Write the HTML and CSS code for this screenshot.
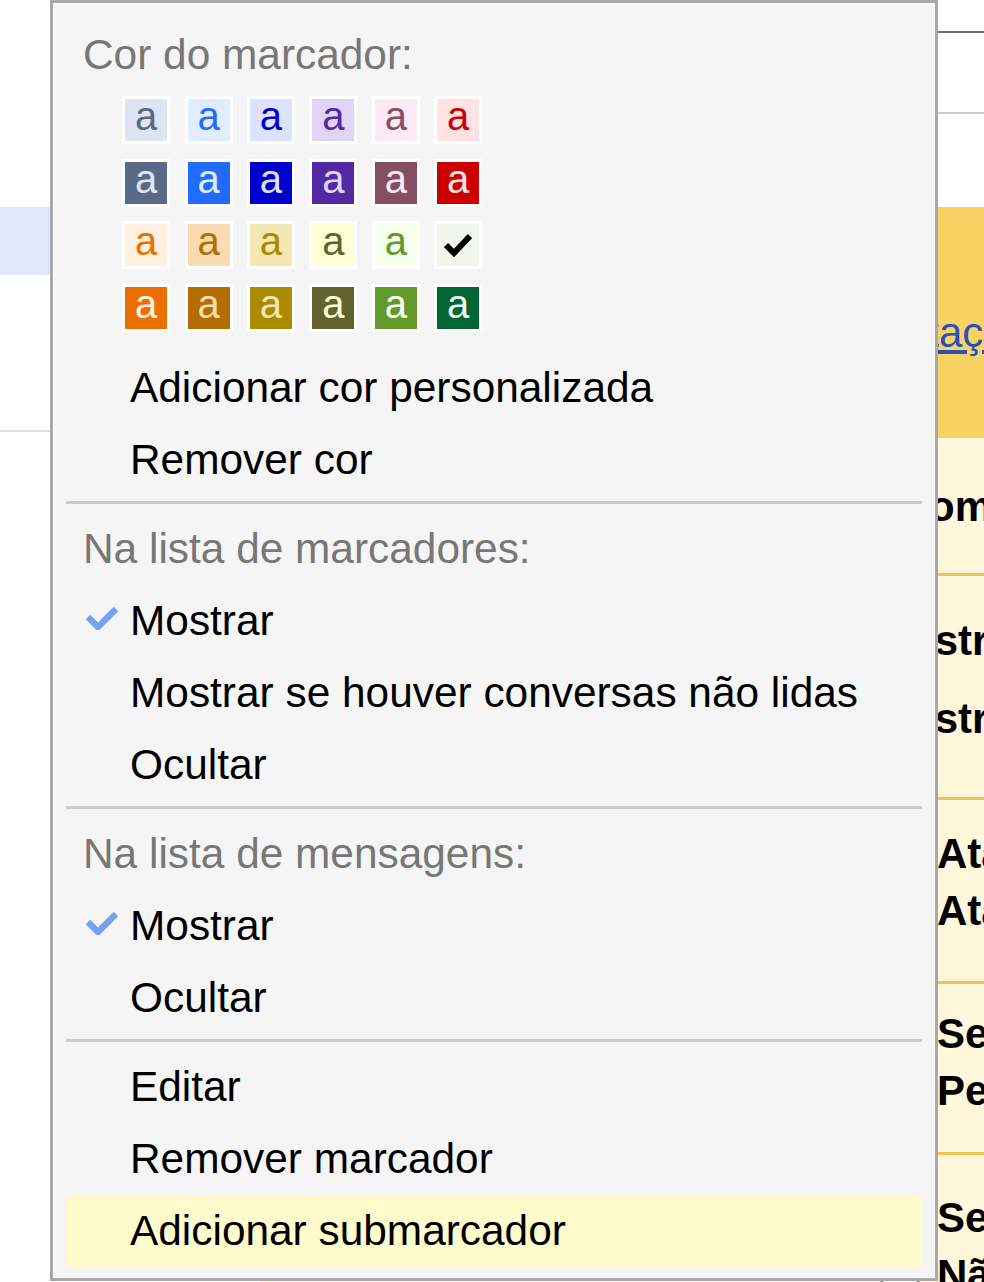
FILE: index.html
```html
<!DOCTYPE html>
<html lang="pt-BR">
<head>
  <meta charset="UTF-8">
  <meta name="viewport" content="width=device-width, initial-scale=1.0">
  <title>Configurações - Marcadores</title>

  <link rel="stylesheet" href="styles.css">
</head>
<body>

  <div class="page">

    <div class="nav">
      <div class="nav-list">
        <div class="nav-item selected">Trabalho</div>
        <div class="nav-item">Viagens</div>
        <div class="nav-item">Mais</div>
      </div>
      <div class="nav-item">Contatos</div>
    </div>

    <div class="main">
      <div class="searchbar"></div>
      <div class="toolbar"></div>

      <div class="settings">
        <div class="settings-head">
          <div class="settings-title">Configurações</div>
          <div class="tabs">
            <a href="#">Geral</a>
            <a href="#">Marcadores</a>
            <a href="#">Contas e importação</a>
            <a href="#">Filtros</a>
          </div>
        </div>

        <div class="settings-row row-a">
          <div class="row-label">Idioma:</div>
          <div class="row-options">
            <div class="opt">Idioma do Gmail: Português (Brasil)</div>
          </div>
        </div>

        <div class="settings-row row-b">
          <div class="row-label">Tamanho máximo da página:</div>
          <div class="row-options">
            <div class="opt">Mostrar 50 conversas por página</div>
            <div class="opt">Mostrar 250 contatos por página</div>
          </div>
        </div>

        <div class="settings-row row-c">
          <div class="row-label">Atalhos do teclado:</div>
          <div class="row-options">
            <div class="opt"><span class="radio"></span>Atalhos de teclado desativados</div>
            <div class="opt"><span class="radio"></span>Atalhos de teclado ativados</div>
          </div>
        </div>

        <div class="settings-row row-d">
          <div class="row-label">Imagens:</div>
          <div class="row-options">
            <div class="opt"><span class="radio"></span>Sempre mostrar imagens externas</div>
            <div class="opt"><span class="radio"></span>Perguntar antes de mostrar imagens externas</div>
          </div>
        </div>

        <div class="settings-row row-e">
          <div class="row-label">Indicadores de nível pessoal:</div>
          <div class="row-options">
            <div class="opt"><span class="radio"></span>Sem indicadores</div>
            <div class="opt"><span class="radio"></span>Não mostrar indicadores</div>
          </div>
        </div>
      </div>
    </div>

  </div>

  <!-- menu de opções do marcador -->
  <div class="label-menu">
    <div class="menu-header">Cor do marcador:</div>

    <div class="swatches">
      <div class="swatch"><span class="chip c1">a</span></div>
      <div class="swatch"><span class="chip c2">a</span></div>
      <div class="swatch"><span class="chip c3">a</span></div>
      <div class="swatch"><span class="chip c4">a</span></div>
      <div class="swatch"><span class="chip c5">a</span></div>
      <div class="swatch"><span class="chip c6">a</span></div>

      <div class="swatch"><span class="chip c7">a</span></div>
      <div class="swatch"><span class="chip c8">a</span></div>
      <div class="swatch"><span class="chip c9">a</span></div>
      <div class="swatch"><span class="chip c10">a</span></div>
      <div class="swatch"><span class="chip c11">a</span></div>
      <div class="swatch"><span class="chip c12">a</span></div>

      <div class="swatch"><span class="chip c13">a</span></div>
      <div class="swatch"><span class="chip c14">a</span></div>
      <div class="swatch"><span class="chip c15">a</span></div>
      <div class="swatch"><span class="chip c16">a</span></div>
      <div class="swatch"><span class="chip c17">a</span></div>
      <div class="swatch">
        <span class="chip c18 chip-check">
          <svg width="28" height="24" viewBox="0 0 28 24"><polyline points="2,12 10,20 26,3" fill="none" stroke="#000" stroke-width="6"/></svg>
        </span>
      </div>

      <div class="swatch"><span class="chip c19">a</span></div>
      <div class="swatch"><span class="chip c20">a</span></div>
      <div class="swatch"><span class="chip c21">a</span></div>
      <div class="swatch"><span class="chip c22">a</span></div>
      <div class="swatch"><span class="chip c23">a</span></div>
      <div class="swatch"><span class="chip c24">a</span></div>
    </div>

    <div class="menu-item">Adicionar cor personalizada</div>
    <div class="menu-item">Remover cor</div>

    <div class="menu-sep"></div>

    <div class="menu-header">Na lista de marcadores:</div>
    <div class="menu-item checked">
      <svg class="check" width="33" height="24" viewBox="0 0 33 24"><polyline points="3,11 13,21 31,3" fill="none" stroke="#79a1f3" stroke-width="6.5"/></svg>Mostrar
    </div>
    <div class="menu-item">Mostrar se houver conversas não lidas</div>
    <div class="menu-item">Ocultar</div>

    <div class="menu-sep"></div>

    <div class="menu-header">Na lista de mensagens:</div>
    <div class="menu-item checked">
      <svg class="check" width="33" height="24" viewBox="0 0 33 24"><polyline points="3,11 13,21 31,3" fill="none" stroke="#79a1f3" stroke-width="6.5"/></svg>Mostrar
    </div>
    <div class="menu-item">Ocultar</div>

    <div class="menu-sep"></div>

    <div class="menu-item">Editar</div>
    <div class="menu-item">Remover marcador</div>
    <div class="menu-item hover">Adicionar submarcador</div>
  </div>

</body>
</html>
```

FILE: styles.css
```css
html, body
{
  margin:0;
  overflow:hidden;
}

body
{
  font-family:"Liberation Sans", Arial, sans-serif;
  font-size:42px;
  background-color:#fff;
  color:#000;
}

div.page
{
  display:flex;
  width:984px;
  height:1282px;
}

/* navegação à esquerda */
div.nav
{
  width:260px;
  flex:none;
  padding-top:207px;
}

div.nav-list
{
  padding-bottom:19px;
  border-bottom:2px solid #d6dff6;
}

div.nav-item
{
  height:68px;
  line-height:68px;
  padding-left:70px;
  white-space:nowrap;
}

div.nav-item.selected
{
  background-color:#e0e7fc;
}

div.main
{
  flex:1;
  min-width:0;
}

div.searchbar
{
  height:31px;
  border-bottom:2px solid #6c6c6c;
}

div.toolbar
{
  height:79px;
  border-bottom:2px solid #cdcdcd;
}

/* caixa de configurações */
div.settings
{
  margin-top:93px;
}

div.settings-head
{
  height:231px;
  box-sizing:border-box;
  padding:20px 0 0 24px;
  background-color:#f9d264;
  white-space:nowrap;
}

div.settings-title
{
  line-height:70px;
  font-weight:bold;
}

div.tabs
{
  display:flex;
  gap:17px;
  line-height:72px;
}

div.tabs a
{
  color:#2a50bd;
  text-decoration:underline;
}

div.settings-row
{
  display:flex;
  padding-left:20px;
  background-color:#fff6dc;
  border-bottom:3px solid #f4c351;
  font-weight:bold;
  white-space:nowrap;
}

div.row-label
{
  width:600px;
  flex:none;
  line-height:57px;
}

div.row-options .opt
{
  line-height:57px;
}

div.row-a { padding:40px 0 38px 20px; }
div.row-b { padding:26px 0 39px 20px; }
div.row-b .row-options { margin-left:-6px; }
div.row-b .row-options .opt { line-height:78px; }
div.row-c { padding:25px 0 42px 20px; }
div.row-d { padding:21px 0 33px 20px; }
div.row-e { padding:34px 0 40px 20px; }

span.radio
{
  display:inline-block;
  width:40px;
  height:40px;
  box-sizing:border-box;
  margin-right:17px;
  border:3px solid #8a8a8a;
  border-radius:50%;
  background-color:#fff;
  vertical-align:middle;
}

/* menu do marcador */
div.label-menu
{
  position:absolute;
  left:50px;
  top:0;
  width:888px;
  box-sizing:border-box;
  padding:16px 0 11px 0;
  border:3px solid #a8a8a8;
  background-color:#f5f5f5;
  box-shadow:inset 0 0 0 1px #fff;
  font-size:42.4px;
}

div.menu-header
{
  margin:0 13px;
  padding-left:17px;
  line-height:72px;
  color:#777;
}

div.menu-item
{
  display:flex;
  align-items:center;
  height:72px;
  line-height:72px;
  margin:0 13px;
  padding-left:64px;
  white-space:nowrap;
}

div.menu-item.checked
{
  padding-left:19px;
}

div.menu-item.hover
{
  background-color:#fffbcc;
}

svg.check
{
  flex:none;
  margin-right:12px;
  margin-bottom:6px;
}

div.menu-sep
{
  height:3px;
  margin:5px 13px 9px 13px;
  background-color:#cbcbcb;
}

div.swatches
{
  display:grid;
  grid-template-columns:repeat(6, 62.4px);
  grid-auto-rows:62.5px;
  margin:-2px 0 13px 0;
  padding-left:62px;
}

div.swatch
{
  display:flex;
  align-items:center;
  justify-content:center;
}

span.chip
{
  display:block;
  width:48px;
  height:48px;
  box-sizing:border-box;
  padding-bottom:7px;
  border:3px solid #fff;
  font-size:40px;
  line-height:35px;
  text-align:center;
  overflow:hidden;
}

span.chip-check
{
  display:flex;
  align-items:center;
  justify-content:center;
  padding-bottom:0;
}

/* cores dos marcadores */
.c1  { background-color:#dee5f2; color:#5a6986; }
.c2  { background-color:#e0ecff; color:#206cff; }
.c3  { background-color:#dfe2ff; color:#0000cc; }
.c4  { background-color:#e0d5f9; color:#5229a3; }
.c5  { background-color:#fde9f4; color:#854f61; }
.c6  { background-color:#ffe3e3; color:#cc0000; }
.c7  { background-color:#5a6986; color:#dee5f2; }
.c8  { background-color:#206cff; color:#e0ecff; }
.c9  { background-color:#0000cc; color:#dfe2ff; }
.c10 { background-color:#5229a3; color:#e0d5f9; }
.c11 { background-color:#854f61; color:#fde9f4; }
.c12 { background-color:#cc0000; color:#ffe3e3; }
.c13 { background-color:#fff0e1; color:#ec7000; }
.c14 { background-color:#fadcb3; color:#b36d00; }
.c15 { background-color:#f3e7b3; color:#ab8b00; }
.c16 { background-color:#ffffd4; color:#636330; }
.c17 { background-color:#f9ffef; color:#64992c; }
.c18 { background-color:#f1f5ec; color:#006633; }
.c19 { background-color:#ec7000; color:#fff0e1; }
.c20 { background-color:#b36d00; color:#fadcb3; }
.c21 { background-color:#ab8b00; color:#f3e7b3; }
.c22 { background-color:#636330; color:#ffffd4; }
.c23 { background-color:#64992c; color:#f9ffef; }
.c24 { background-color:#006633; color:#f1f5ec; }
```
